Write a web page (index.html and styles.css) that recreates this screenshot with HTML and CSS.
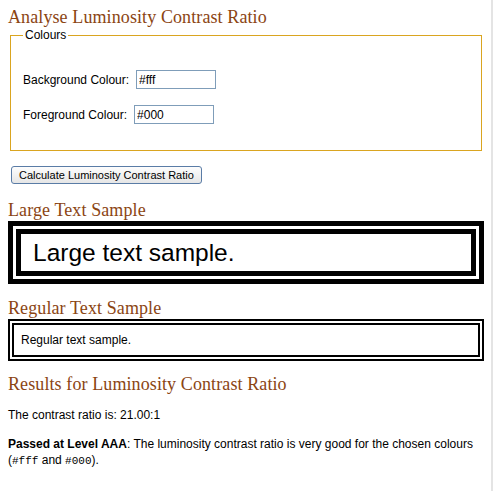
FILE: index.html
```html
<!DOCTYPE html>
<html lang="en">
<head>
    <meta charset="UTF-8">
    <title>Analyse Luminosity Contrast Ratio</title>
    <link rel="stylesheet" href="styles.css">
</head>
<body>
    <div class="page">
        <h1>Analyse Luminosity Contrast Ratio</h1>
        <fieldset class="colours">
            <legend>Colours</legend>
            <div class="row">
                <label for="bg">Background Colour:</label>
                <input type="text" id="bg" value="#fff">
            </div>
            <div class="row">
                <label for="fg">Foreground Colour:</label>
                <input type="text" id="fg" value="#000">
            </div>
        </fieldset>
        <button class="calc">Calculate Luminosity Contrast Ratio</button>

        <h2 class="first">Large Text Sample</h2>
        <div class="sample large">Large text sample.</div>

        <h2>Regular Text Sample</h2>
        <div class="sample regular">Regular text sample.</div>

        <h2 class="results">Results for Luminosity Contrast Ratio</h2>
        <p class="ratio">The contrast ratio is: 21.00:1</p>
        <p><strong>Passed at Level AAA</strong>: The luminosity contrast ratio is very good for the chosen colours (<code>#fff</code> and <code>#000</code>).</p>
    </div>
</body>
</html>
```
FILE: styles.css
```css
html, body {
    margin: 0;
    background: #fff;
}
body {
    font-family: "Liberation Sans", Arial, sans-serif;
    font-size: 12px;
    color: #000;
}
.page {
    width: 476px;
    min-height: 491px;
    padding: 0 7px 0 8px;
    border-right: 2px solid #e4e4e4;
}
h1, h2 {
    font-family: "Liberation Serif", "Times New Roman", serif;
    font-weight: normal;
    color: #8b4513;
    font-size: 18px;
    line-height: 21px;
    margin: 0;
    letter-spacing: 0.1px;
}
h1 {
    padding-top: 7px;
}
h2 {
    margin-top: 14px;
}
h2.first {
    margin-top: 16px;
}
h2.results {
    margin-top: 13px;
}
.colours {
    margin: 0 2px;
    padding: 12px 12px 26px;
    border: 1px solid #daa520;
}
.colours legend {
    padding: 0 2px;
}
.row {
    display: flex;
    align-items: center;
    margin-top: 16px;
}
.row label {
    margin-right: 7px;
}
.row input {
    width: 80px;
    height: 19px;
    box-sizing: border-box;
    padding: 1px 2px;
    border: 1px solid #7f9db9;
    font: 12px "Liberation Sans", Arial, sans-serif;
    color: #000;
}
.calc {
    display: block;
    margin: 15px 0 0 3px;
    height: 18px;
    padding: 0 7px;
    border: 1px solid #5a7ca6;
    border-radius: 3px;
    background: linear-gradient(#fdfdfd, #e6e6e6);
    font: 11px "Liberation Sans", Arial, sans-serif;
    color: #000;
}
.sample {
    background: #fff;
    color: #000;
}
.sample.large {
    border: 5px solid #000;
    box-shadow: inset 0 0 0 3px #fff, inset 0 0 0 8px #000;
    padding: 13px 20px 12px;
    font-size: 24.5px;
    line-height: 28px;
}
.sample.regular {
    border: 6px double #000;
    padding: 8px 7px;
    line-height: 14px;
}
p {
    line-height: 16px;
    margin: 13px 0;
}
p.ratio {
    margin-top: 12px;
}
code {
    font-family: "Liberation Mono", "Courier New", monospace;
    font-size: 11px;
    line-height: 12px;
}
```
